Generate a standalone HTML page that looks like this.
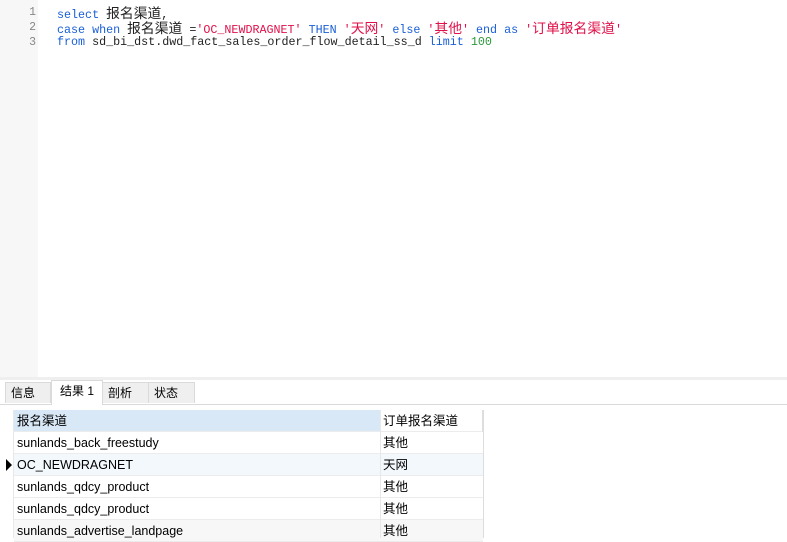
<!DOCTYPE html>
<html><head><meta charset="utf-8"><style>
body{margin:0;width:787px;height:538px;overflow:hidden;background:#fff;font-family:"Liberation Sans","Noto Sans CJK SC",sans-serif;position:relative}
.gut{position:absolute;left:0;top:0;width:38px;height:377px;background:#f7f7f7}
.ln{position:absolute;left:0;width:36px;text-align:right;font:11.5px/15px "Liberation Mono",monospace;color:#888}
.code{position:absolute;left:57px;font:11.7px/15px "Liberation Mono","Noto Sans CJK SC",monospace;color:#222;white-space:pre}
.c{font-family:"Noto Sans CJK SC",sans-serif;font-size:13.8px;line-height:15px}
.k{color:#1a5fd8}.s{color:#e0104a}.n{color:#2a9a3a}
.sep{position:absolute;left:0;top:377px;width:787px;height:3px;background:#efefef}
.tabbar{position:absolute;left:0;top:380px;width:787px;height:24px;border-bottom:1px solid #dadada}
.tab{position:absolute;top:2px;height:21px;border:1px solid #dadada;border-bottom:none;background:#efefef;font-size:12px;line-height:21px;box-sizing:border-box;padding-left:5px}
.tab.a{top:0;height:25px;background:#fff;padding-left:8px}
.row{position:absolute;left:14px;width:469px;height:22px;font-size:12.5px;line-height:22px;border-bottom:1px solid #ececec;box-sizing:border-box}
.c1{position:absolute;left:3px}.c2{position:absolute;left:369px}
.vl{position:absolute;left:380px;top:410px;width:1px;height:128px;background:#e8e8e8}
</style></head><body>
<div class="gut"></div>
<div class="ln" style="top:5px">1</div><div class="ln" style="top:20px">2</div><div class="ln" style="top:35px">3</div>
<div class="code" style="top:5px"><span class="k">select</span> <span class="c">报名渠道</span>,</div>
<div class="code" style="top:20px"><span class="k">case when</span> <span class="c">报名渠道</span> =<span class="s">'OC_NEWDRAGNET'</span> <span class="k">THEN</span> <span class="s">'<span class="c">天网</span>'</span> <span class="k">else</span> <span class="s">'<span class="c">其他</span>'</span> <span class="k">end as</span> <span class="s">'<span class="c">订单报名渠道</span>'</span></div>
<div class="code" style="top:35px"><span class="k">from</span> sd_bi_dst.dwd_fact_sales_order_flow_detail_ss_d <span class="k">limit</span> <span class="n">100</span></div>
<div class="sep"></div>
<div class="tabbar">
<div class="tab" style="left:5px;width:46px">信息</div>
<div class="tab a" style="left:51px;width:52px">结果 1</div>
<div class="tab" style="left:102px;width:47px">剖析</div>
<div class="tab" style="left:148px;width:47px">状态</div>
</div>
<div class="row" style="top:410px;height:22px;background:linear-gradient(90deg,#d9e8f6 366px,#fff 366px);border-right:1px solid #ddd"><span class="c1">报名渠道</span><span class="c2">订单报名渠道</span></div>
<div class="row" style="top:432px"><span class="c1">sunlands_back_freestudy</span><span class="c2">其他</span></div>
<div class="row" style="top:454px;background:#f3f8fd"><span class="c1">OC_NEWDRAGNET</span><span class="c2">天网</span></div>
<div style="position:absolute;left:6px;top:459px;width:0;height:0;border-top:6px solid transparent;border-bottom:6px solid transparent;border-left:6px solid #000"></div>
<div class="row" style="top:476px"><span class="c1">sunlands_qdcy_product</span><span class="c2">其他</span></div>
<div class="row" style="top:498px"><span class="c1">sunlands_qdcy_product</span><span class="c2">其他</span></div>
<div class="row" style="top:520px;background:#f7f7f7"><span class="c1">sunlands_advertise_landpage</span><span class="c2">其他</span></div>
<div class="vl"></div>
<div style="position:absolute;left:483px;top:410px;width:1px;height:128px;background:#ddd"></div>
<div style="position:absolute;left:13px;top:410px;width:1px;height:128px;background:#e8e8e8"></div>
</body></html>
